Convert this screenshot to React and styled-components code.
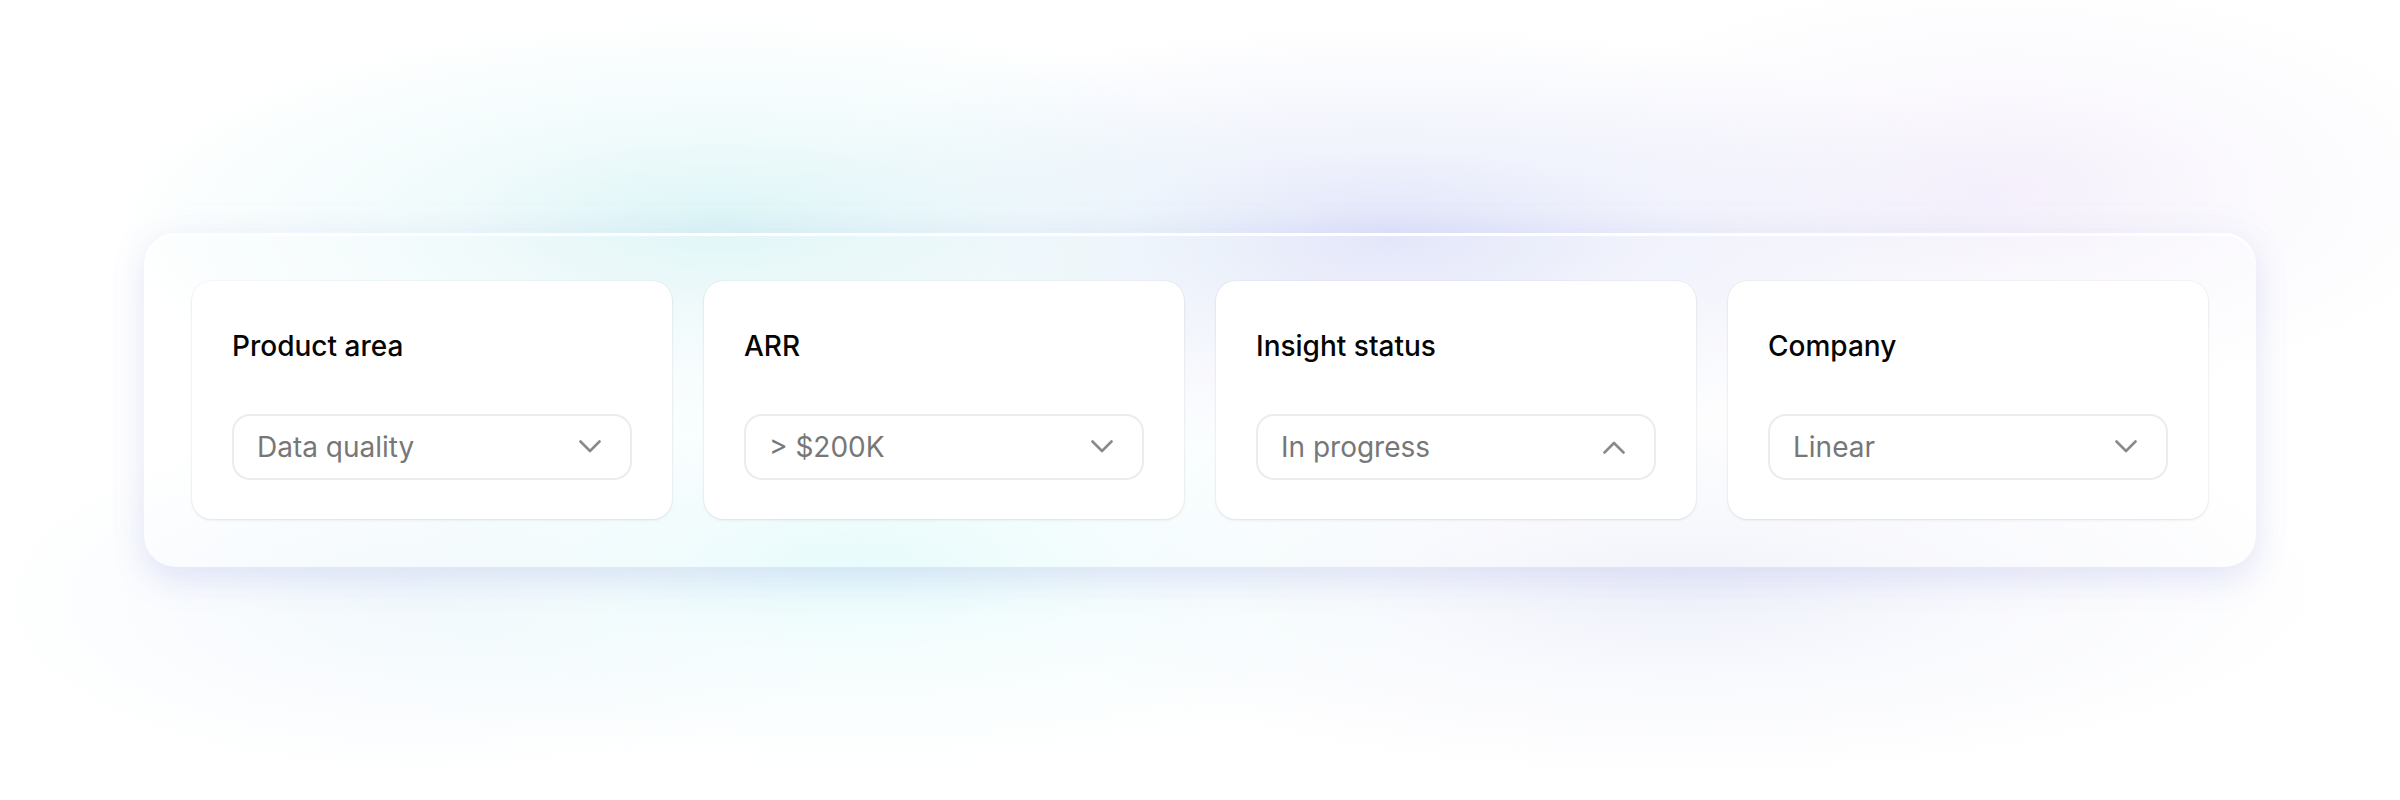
import React from 'react';
import styled, { createGlobalStyle } from 'styled-components';

const GlobalStyle = createGlobalStyle`
  html, body {
    margin: 0;
    padding: 0;
    background: #ffffff;
  }
  body {
    font-family: Inter, "Noto Sans", "Liberation Sans", sans-serif;
    -webkit-font-smoothing: antialiased;
  }
`;

// soft coloured glows behind the glass panel
const Stage = styled.main`
  width: 100%;
  height: 800px;
  display: flex;
  align-items: center;
  justify-content: center;
  background-color: #ffffff;
  background-image:
    radial-gradient(ellipse 620px 210px at 720px 225px, rgba(218, 244, 246, 0.95) 0%, rgba(228, 247, 249, 0.55) 45%, rgba(255, 255, 255, 0) 100%),
    radial-gradient(ellipse 640px 215px at 1390px 240px, rgba(222, 226, 249, 0.95) 0%, rgba(228, 232, 250, 0.5) 45%, rgba(255, 255, 255, 0) 100%),
    radial-gradient(ellipse 480px 210px at 2000px 190px, rgba(242, 236, 250, 0.85) 0%, rgba(244, 240, 251, 0.45) 45%, rgba(255, 255, 255, 0) 100%),
    radial-gradient(ellipse 640px 210px at 860px 560px, rgba(228, 251, 252, 0.95) 0%, rgba(236, 251, 252, 0.5) 45%, rgba(255, 255, 255, 0) 100%),
    radial-gradient(ellipse 660px 190px at 1680px 590px, rgba(236, 239, 250, 0.85) 0%, rgba(240, 242, 251, 0.45) 45%, rgba(255, 255, 255, 0) 100%),
    radial-gradient(ellipse 440px 180px at 420px 600px, rgba(238, 245, 252, 0.7) 0%, rgba(255, 255, 255, 0) 100%);
`;

const Panel = styled.section`
  width: 2112px;
  box-sizing: border-box;
  padding: 48px;
  display: grid;
  grid-template-columns: repeat(4, 1fr);
  gap: 32px;
  border-radius: 32px;
  background: rgba(255, 255, 255, 0.12);
  box-shadow:
    inset 0 3px 0 rgba(255, 255, 255, 1),
    0 14px 34px rgba(110, 120, 210, 0.15),
    0 0 40px rgba(150, 155, 225, 0.07);
`;

const Card = styled.div`
  background: #ffffff;
  border-radius: 20px;
  padding: 48px 40px 39px;
  display: flex;
  flex-direction: column;
  box-shadow: 0 1px 3px rgba(20, 30, 60, 0.1), 0 0 0 1px rgba(20, 30, 60, 0.02);
`;

const Label = styled.h3`
  margin: 0;
  font-size: 28px;
  line-height: 34px;
  font-weight: 500;
  color: #050505;
`;

const Select = styled.div`
  margin-top: 51px;
  height: 66px;
  box-sizing: border-box;
  border: 2px solid #ececec;
  border-radius: 18px;
  display: flex;
  align-items: center;
  justify-content: space-between;
  padding: 0 29px 0 23px;
`;

const Value = styled.span`
  font-size: 28px;
  line-height: 34px;
  color: #777777;
`;

const Chevron = ({ up }) => (
  <svg width="22" height="14" viewBox="0 0 22 14" fill="none">
    <polyline
      points={up ? '1.5,12.5 11,3 20.5,12.5' : '1.5,1.5 11,11 20.5,1.5'}
      stroke="#8a8a8a"
      strokeWidth="2.6"
      strokeLinecap="round"
      strokeLinejoin="round"
    />
  </svg>
);

const filters = [
  { label: 'Product area', value: 'Data quality' },
  { label: 'ARR', value: '> $200K' },
  { label: 'Insight status', value: 'In progress', open: true },
  { label: 'Company', value: 'Linear' },
];

const App = () => {
  return (
    <>
      <GlobalStyle />
      <Stage>
        <Panel>
          {filters.map((f) => (
            <Card key={f.label}>
              <Label>{f.label}</Label>
              <Select>
                <Value>{f.value}</Value>
                <Chevron up={f.open} />
              </Select>
            </Card>
          ))}
        </Panel>
      </Stage>
    </>
  );
};

export default App;
